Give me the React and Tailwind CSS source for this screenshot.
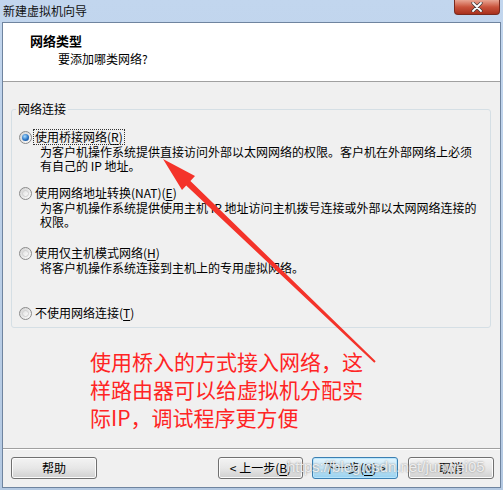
import React from "react";

const Radio = ({ checked }) => (
  <span className="flex h-[13px] w-[13px] shrink-0 items-center justify-center rounded-full border border-[#8a8a8a] bg-gradient-to-br from-[#d2d2d2] to-[#fdfdfd]">
    {checked ? (
      <span className="h-[7px] w-[7px] rounded-full bg-[radial-gradient(circle_at_40%_35%,#a8dcff,#2a74c4_55%,#0d3f80)]" />
    ) : (
      <span className="h-[7px] w-[7px] rounded-full border border-[#cfcfcf] bg-gradient-to-br from-[#e2e2e2] to-[#fafafa]" />
    )}
  </span>
);

const Option = ({ label, hotkey, desc = [], checked, focused, className = "" }) => (
  <div className={className}>
    <div className="ml-[7px] flex h-[16px] items-center gap-[2px]">
      <Radio checked={checked} />
      <span
        className={
          "px-px leading-[14px] " +
          (focused ? "outline outline-1 outline-dotted outline-[#333]" : "")
        }
      >
        {label}(<span className="underline underline-offset-2">{hotkey}</span>)
      </span>
    </div>
    {desc.map((line) => (
      <div key={line} className="pl-[28px] leading-[14px]">
        {line}
      </div>
    ))}
  </div>
);

const Button = ({ children, primary, className = "" }) => (
  <button
    className={
      "flex h-[22px] items-center justify-center rounded-[3px] border text-[12px] " +
      (primary
        ? "border-[#3c7fb1] bg-gradient-to-b from-[#e5f4fc] via-[#c4e5f6] to-[#98d1ef] shadow-[inset_0_0_0_1px_#b8e6fd] "
        : "border-[#707070] bg-gradient-to-b from-[#f3f3f3] via-[#e7e7e7] to-[#d0d0d0] shadow-[inset_0_0_0_1px_#fcfcfc] ") +
      className
    }
  >
    {children}
  </button>
);

export default function App() {
  return (
    <div className="relative flex h-[490px] w-[503px] flex-col overflow-hidden bg-gradient-to-b from-[#c2d6ee] to-[#b4c9e2] font-[family-name:'Noto_Sans_CJK_SC',sans-serif] text-[12px] text-black">
      {/* title bar */}
      <div className="flex h-[22px] items-start">
        <span className="mt-[3px] pl-[3px] leading-[16px] text-[#111]">新建虚拟机向导</span>
        <div className="ml-auto mr-[3px] flex h-[15px] w-[46px] items-center justify-center rounded-b-[4px] border border-t-0 border-[#7a2a1e] bg-gradient-to-b from-[#e8a593] via-[#c9533c] to-[#a8301c]">
          <svg width="12" height="10" viewBox="0 0 12 10">
            <path d="M2 1 L10 9 M10 1 L2 9" stroke="#3a3a3a" strokeWidth="3.2" strokeLinecap="round" />
            <path d="M2 1 L10 9 M10 1 L2 9" stroke="#fff" strokeWidth="1.8" strokeLinecap="round" />
          </svg>
        </div>
      </div>

      {/* dialog body */}
      <div className="mx-[2px] mb-[2px] flex flex-1 flex-col border border-[#6f849f] bg-[#f0f0f0]">
        <div className="h-[59px] border-b border-[#a0a0a0] bg-white pl-[27px] pt-[10px]">
          <div className="text-[13px] font-bold leading-[16px]">网络类型</div>
          <div className="mt-[2px] pl-[28px] leading-[16px]">要添加哪类网络?</div>
        </div>

        <fieldset className="ml-[8px] mt-[19px] w-[480px] rounded-[3px] border border-[#d5dfe5] px-0 pb-[6px] pt-[12px]">
          <legend className="ml-[4px] px-[2px] leading-[16px]">网络连接</legend>
          <Option
            label="使用桥接网络"
            hotkey="R"
            checked
            focused
            desc={["为客户机操作系统提供直接访问外部以太网网络的权限。客户机在外部网络上必须", "有自己的 IP 地址。"]}
          />
          <Option
            className="mt-[12px]"
            label="使用网络地址转换(NAT)"
            hotkey="E"
            desc={["为客户机操作系统提供使用主机 IP 地址访问主机拨号连接或外部以太网网络连接的", "权限。"]}
          />
          <Option
            className="mt-[16px]"
            label="使用仅主机模式网络"
            hotkey="H"
            desc={["将客户机操作系统连接到主机上的专用虚拟网络。"]}
          />
          <Option className="mt-[30px]" label="不使用网络连接" hotkey="T" />
        </fieldset>

        <div className="mt-[19px] pl-[87px] text-[21px] leading-[28px] text-[#ff2424]">
          <div>使用桥入的方式接入网络，这</div>
          <div>样路由器可以给虚拟机分配实</div>
          <div>际IP，调试程序更方便</div>
        </div>

        <div className="mt-auto flex h-[39px] items-center border-t border-[#a0a0a0] shadow-[inset_0_1px_0_#fff]">
          <Button className="ml-[8px] w-[86px]">帮助</Button>
          <Button className="ml-auto w-[85px]">
            &lt; 上一步(<span className="underline underline-offset-2">B</span>)
          </Button>
          <Button primary className="ml-[9px] w-[86px]">
            下一步(<span className="underline underline-offset-2">N</span>) &gt;
          </Button>
          <Button className="ml-[10px] mr-[6px] w-[86px]">取消</Button>
        </div>
      </div>

      {/* watermark */}
      <div className="pointer-events-none absolute left-[287px] top-[458px] font-['Liberation_Sans',sans-serif] text-[15px] leading-[18px] text-white/80 [text-shadow:0_0_2px_#777]">
        https://blog.csdn.net/junwei05
      </div>

      {/* annotation arrow */}
      <svg className="pointer-events-none absolute inset-0" width="503" height="490" viewBox="0 0 503 490">
        <polygon
          points="163,159 195,176 190.4,181 375.7,361.3 374.3,362.7 186.2,185.4 182,190"
          fill="#f4332a"
        />
      </svg>
    </div>
  );
}
